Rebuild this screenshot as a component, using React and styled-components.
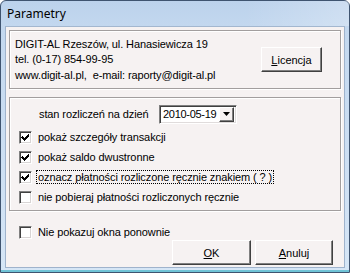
import React from "react";
import styled, { createGlobalStyle } from "styled-components";

const GlobalStyle = createGlobalStyle`
  html, body {
    margin: 0;
    padding: 0;
    width: 350px;
    height: 273px;
    overflow: hidden;
  }
`;

const Window = styled.div`
  box-sizing: border-box;
  width: 350px;
  height: 273px;
  display: flex;
  flex-direction: column;
  border: 1px solid #3f5470;
  border-radius: 6px 6px 0 0;
  background: linear-gradient(180deg, #bcd2ec 0%, #c3d8ef 10%, #cddff3 60%, #d6e6f6 100%);
  box-shadow: inset 0 -2px 0 #6fc3d6;
  font-family: "Liberation Sans", Arial, sans-serif;
  font-size: 11px;
  letter-spacing: -0.1px;
  color: #000;
`;

const TitleBar = styled.div`
  height: 25px;
  display: flex;
  align-items: center;
  padding-left: 6px;
  font-family: "Noto Sans", "Open Sans", sans-serif;
  font-size: 12px;
  letter-spacing: 0;
  color: #000;
  background: linear-gradient(90deg, rgba(255, 255, 255, 0) 0%, rgba(255, 255, 255, 0) 70%, rgba(255, 255, 255, 0.25) 100%);
`;

const Client = styled.div`
  flex: 1;
  margin: 0 4px 4px 4px;
  padding: 3px 3px 0 3px;
  display: flex;
  flex-direction: column;
  background: #f6f2f2;
  border: 1px solid #9fb3cc;
  border-top-color: #a3b7cf;
`;

const Frame = styled.div`
  border: 1px solid #a29e9e;
  box-shadow: inset 1px 1px 0 #fff, 1px 1px 0 #fff;
`;

const InfoFrame = styled(Frame)`
  height: 57px;
  display: flex;
  align-items: center;
  justify-content: space-between;
  padding: 0 18px 0 5px;
`;

const InfoText = styled.div`
  line-height: 15.5px;
  margin-top: 1px;
`;

const Button = styled.button`
  box-sizing: border-box;
  width: ${(p) => p.$w || 78}px;
  height: 25px;
  padding: 0;
  font-family: "Liberation Sans", Arial, sans-serif;
  font-size: 11px;
  color: #000;
  background: #f6f2f2;
  border: 1px solid;
  border-color: #fff #404040 #404040 #fff;
  box-shadow: inset -1px -1px 0 #808080;
  cursor: default;

  u {
    text-underline-offset: 1px;
  }
`;

const OptionsFrame = styled(Frame)`
  margin-top: 8px;
  height: 114px;
  box-sizing: border-box;
  padding: 6px 0 0 9px;
  display: flex;
  flex-direction: column;
`;

const DateRow = styled.div`
  height: 20px;
  display: flex;
  align-items: center;
  padding-left: 20px;
  margin-bottom: 3px;
  white-space: nowrap;
`;

const DateLabel = styled.span`
  width: 120px;
  flex: none;
`;

const Combo = styled.div`
  box-sizing: border-box;
  width: 78px;
  height: 19px;
  flex: none;
  display: flex;
  align-items: center;
  justify-content: space-between;
  background: #fff;
  border: 1px solid;
  border-color: #808080 #fff #fff #808080;
  box-shadow: inset 1px 1px 0 #404040, inset -1px -1px 0 #e0dcdc;
  padding: 0 2px 0 3px;
  letter-spacing: -0.3px;
`;

const ComboButton = styled.div`
  box-sizing: border-box;
  width: 15px;
  height: 15px;
  flex: none;
  display: flex;
  align-items: center;
  justify-content: center;
  background: #f6f2f2;
  border: 1px solid;
  border-color: #fff #404040 #404040 #fff;
  box-shadow: inset -1px -1px 0 #808080;
`;

const Row = styled.label`
  height: 20px;
  display: flex;
  align-items: center;
  gap: 6px;
  white-space: nowrap;
`;

const Box = styled.span`
  box-sizing: border-box;
  width: 13px;
  height: 13px;
  flex: none;
  display: flex;
  align-items: center;
  justify-content: center;
  background: #fff;
  border: 1px solid;
  border-color: #808080 #fff #fff #808080;
  box-shadow: inset 1px 1px 0 #404040, inset -1px -1px 0 #d8d4d4;
`;

const Focus = styled.span`
  outline: 1px dotted #000;
  outline-offset: 0;
  padding: 0 1px;
  margin-left: -1px;
`;

const Footer = styled.div`
  display: flex;
  flex-direction: column;
`;

const FooterRow = styled(Row)`
  margin-top: 11px;
  padding-left: 10px;
`;

const Buttons = styled.div`
  display: flex;
  justify-content: flex-end;
  gap: 4px;
  padding-right: 8px;
  margin-top: -2px;
`;

const Check = ({ on }) => (
  <Box>
    {on && (
      <svg width="9" height="9" viewBox="0 0 9 9" shapeRendering="crispEdges">
        <path d="M1 3h1v1h1v1h1v-1h1v-1h1v-1h1v-1h1v3h-1v1h-1v1h-1v1h-1v1h-1v-1h-1v-1h-1v-1h-1z" fill="#000" />
      </svg>
    )}
  </Box>
);

const Option = ({ on, children }) => (
  <Row>
    <Check on={on} />
    {children}
  </Row>
);

export default function App() {
  return (
    <>
      <GlobalStyle />
      <Window>
        <TitleBar>Parametry</TitleBar>
        <Client>
          <InfoFrame>
            <InfoText>
              DIGIT-AL Rzeszów, ul. Hanasiewicza 19
              <br />
              tel. (0-17) 854-99-95
              <br />
              www.digit-al.pl,&nbsp; e-mail: raporty@digit-al.pl
            </InfoText>
            <Button $w={61}>
              <u>L</u>icencja
            </Button>
          </InfoFrame>
          <OptionsFrame>
            <DateRow>
              <DateLabel>stan rozliczeń na dzień</DateLabel>
              <Combo>
                <span>2010-05-19</span>
                <ComboButton>
                  <svg width="7" height="4" viewBox="0 0 7 4">
                    <path d="M0 0h7L3.5 4z" fill="#000" />
                  </svg>
                </ComboButton>
              </Combo>
            </DateRow>
            <Option on>pokaż szczegóły transakcji</Option>
            <Option on>pokaż saldo dwustronne</Option>
            <Option on>
              <Focus>oznacz płatności rozliczone ręcznie znakiem ( ? )</Focus>
            </Option>
            <Option>nie pobieraj płatności rozliczonych ręcznie</Option>
          </OptionsFrame>
          <Footer>
            <FooterRow>
              <Check />
              Nie pokazuj okna ponownie
            </FooterRow>
            <Buttons>
              <Button $w={79}>
                <u>O</u>K
              </Button>
              <Button>
                <u>A</u>nuluj
              </Button>
            </Buttons>
          </Footer>
        </Client>
      </Window>
    </>
  );
}
